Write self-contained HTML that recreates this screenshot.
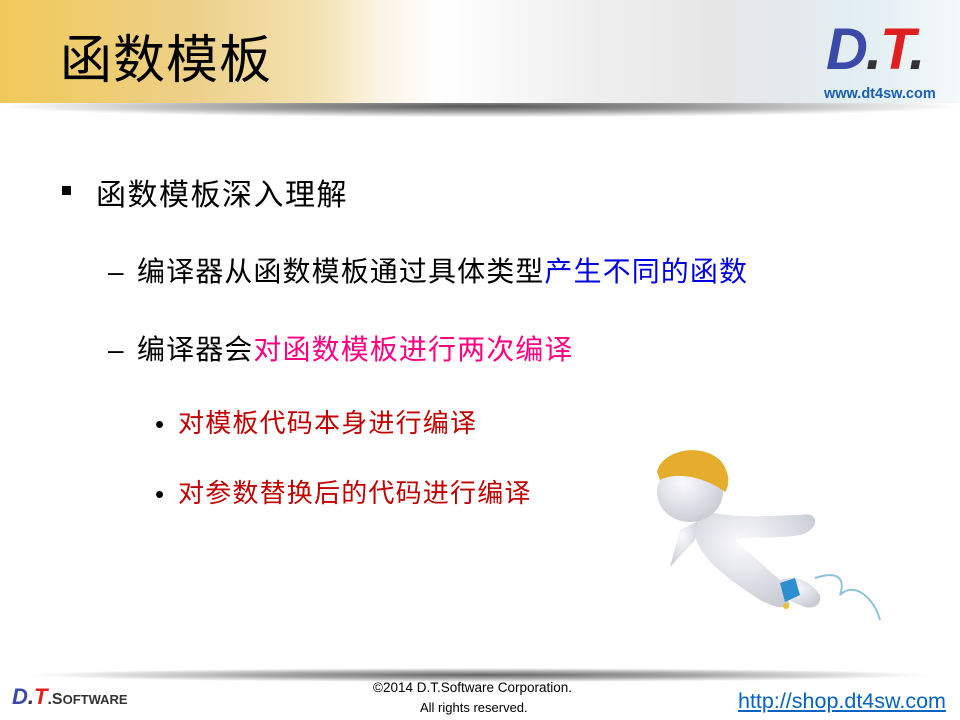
<!DOCTYPE html>
<html><head><meta charset="utf-8"><style>
body{margin:0;width:960px;height:720px;position:relative;overflow:hidden;background:#fff;font-family:"Liberation Sans","Noto Sans CJK SC",sans-serif}
.hdr{position:absolute;left:0;top:0;width:960px;height:103px;background:linear-gradient(90deg,#f0c95a 0%,#edd088 20%,#f3e2b2 33%,#fbf5e6 40%,#fff 46%,#f0f0f0 60%,#e6e6e6 75%,#e2eef2 90%,#f4f9fb 100%)}
.sh{position:absolute;left:0;top:103px;width:960px;height:22px;background:radial-gradient(ellipse 50% 50% at 50% 15%,#555 0%,#999 45%,rgba(255,255,255,0) 100%)}
.title{position:absolute;left:60px;top:18px;font-size:52px;color:#000;font-family:"Noto Sans CJK SC",sans-serif;letter-spacing:1px}
.t{position:absolute;font-family:"Liberation Sans","Noto Sans CJK SC",sans-serif;white-space:nowrap}
.l1{font-size:30px;letter-spacing:1.5px;color:#000}
.l2{font-size:28px;letter-spacing:1px;color:#000}
.l3{font-size:26px;letter-spacing:1.2px;color:#c00000}
.fsh{position:absolute;left:30px;top:668px;width:900px;height:14px;background:radial-gradient(ellipse 50% 50% at 50% 50%,#666 0%,#aaa 50%,rgba(255,255,255,0) 100%)}
</style></head><body>
<div class="hdr"></div><div class="sh"></div>
<div class="title">函数模板</div>
<div class="t" style="left:826px;top:16px;font-size:58px;font-weight:bold;font-style:italic;letter-spacing:-2px"><span style="color:#3b4aa8">D</span><span style="color:#333">.</span><span style="color:#e02020">T</span><span style="color:#333">.</span></div>
<div class="t" style="left:824px;top:86px;font-size:14.5px;color:#1a5fb4;font-weight:bold">www.dt4sw.com</div>

<div class="t" style="left:62px;top:186px;width:9px;height:9px;background:#000"></div>
<div class="t l1" style="left:96px;top:170px">函数模板深入理解</div>
<div class="t l2" style="left:108px;top:256px">–</div>
<div class="t l2" style="left:137px;top:250px;letter-spacing:1.1px">编译器从函数模板通过具体类型<span style="color:#0000e0">产生不同的函数</span></div>
<div class="t l2" style="left:108px;top:334px">–</div>
<div class="t l2" style="left:137px;top:328px;letter-spacing:1.1px">编译器会<span style="color:#ff0080">对函数模板进行两次编译</span></div>
<div class="t l3" style="left:155px;top:409px;color:#000">•</div>
<div class="t l3" style="left:178px;top:403px">对模板代码本身进行编译</div>
<div class="t l3" style="left:155px;top:479px;color:#000">•</div>
<div class="t l3" style="left:178px;top:473px">对参数替换后的代码进行编译</div>

<svg style="position:absolute;left:640px;top:430px" width="260" height="200" viewBox="0 0 260 200">
<defs><radialGradient id="g" cx="40%" cy="35%" r="70%"><stop offset="0" stop-color="#fbfbfd"/><stop offset="1" stop-color="#c8cad4"/></radialGradient></defs>
<path d="M175,148 C200,140 205,150 200,165 C215,150 235,170 240,190" stroke="#8fc3d8" stroke-width="2" fill="none"/>
<path d="M40,100 L60,90 L55,110 L30,137 Z" fill="url(#g)"/>
<path d="M60,80 C100,90 130,85 160,85 C180,80 180,100 160,105 C130,110 110,105 95,110 L140,150 L150,175 C140,180 130,175 120,170 C90,150 60,130 55,105 Z" fill="url(#g)"/>
<path d="M140,150 C155,145 170,150 180,165 C182,178 170,180 160,175 C150,172 140,165 140,150 Z" fill="url(#g)"/>
<ellipse cx="50" cy="62" rx="33" ry="30" fill="url(#g)"/>
<path d="M17,42 C22,20 60,12 80,30 C90,42 90,55 85,62 C70,50 40,40 20,50 Z" fill="#e6ad2c"/>
<path d="M140,153 L155,148 L160,165 L145,172 Z" fill="#2e8fd0"/>
<circle cx="146" cy="176" r="3" fill="#e8c030"/>
</svg>

<div class="fsh"></div>
<div class="t" style="left:12px;top:684px;font-size:22px;font-weight:bold;font-style:italic"><span style="color:#3b4aa8">D</span><span style="color:#333">.</span><span style="color:#e02020">T</span><span style="color:#333;font-style:normal;font-size:16px">.S<span style="font-size:13px">OFTWARE</span></span></div>
<div class="t" style="left:373px;top:680px;font-size:13.5px;color:#000">©2014 D.T.Software Corporation.</div>
<div class="t" style="left:420px;top:700px;font-size:13px;color:#000">All rights reserved.</div>
<div class="t" style="left:738px;top:689px;font-size:21.5px;color:#0563c1;text-decoration:underline">http://shop.dt4sw.com</div>
</body></html>
